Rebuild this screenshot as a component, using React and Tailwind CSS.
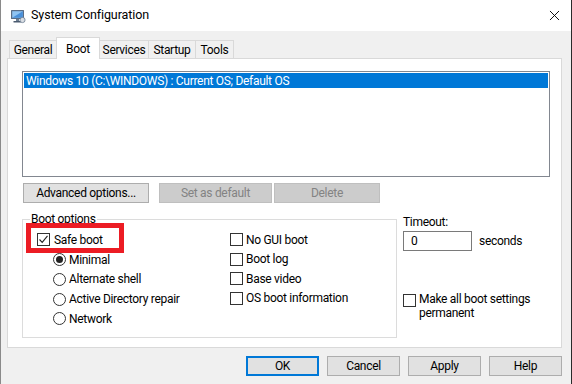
import { X } from 'lucide-react'

const FONT = { fontFamily: 'Roboto, "Noto Sans", sans-serif' }

const TABS = [
  { label: 'General', w: 'w-[48px]' },
  { label: 'Boot', w: 'w-[44px]', active: true },
  { label: 'Services', w: 'w-[50px]' },
  { label: 'Startup', w: 'w-[48px]' },
  { label: 'Tools', w: 'w-[39px]' },
]

function CheckBox({ checked }) {
  return (
    <span className="flex h-[13px] w-[13px] shrink-0 items-center justify-center border border-[#333] bg-white">
      {checked && (
        <svg viewBox="0 0 11 11" className="h-[11px] w-[11px]">
          <path d="M1.5 5.5 L4.2 8.3 L9.5 1.8" fill="none" stroke="#222" strokeWidth="1.1" />
        </svg>
      )}
    </span>
  )
}

function Radio({ checked }) {
  return (
    <span className="flex h-[13px] w-[13px] shrink-0 items-center justify-center rounded-full border border-[#333] bg-white">
      {checked && <span className="h-[7px] w-[7px] rounded-full bg-[#222]" />}
    </span>
  )
}

function AppIcon() {
  return (
    <svg viewBox="0 0 16 16" className="h-4 w-4">
      <rect x="1" y="2" width="13" height="9" rx="0.5" fill="#5a6d86" />
      <rect x="2.2" y="3.2" width="10.6" height="6.6" fill="#8fc4f3" />
      <path d="M2.2 9.8 L12.8 3.2 L12.8 9.8 Z" fill="#4a90d9" />
      <rect x="6" y="11" width="3" height="2" fill="#6b7c90" />
      <rect x="3.5" y="13" width="8" height="1.5" fill="#4b5b70" />
      <circle cx="12.5" cy="12" r="2.6" fill="#d9dde3" stroke="#6b7c90" strokeWidth="0.8" />
    </svg>
  )
}

function Button({ children, w, disabled, primary }) {
  return (
    <div
      className={`flex h-[20px] items-center justify-center ${w} ${
        disabled
          ? 'border border-[#bfbfbf] bg-[#cccccc] text-[#838383]'
          : primary
            ? 'border-2 border-[#0078d7] bg-[#e1e1e1] text-black'
            : 'border border-[#adadad] bg-[#e1e1e1] text-black'
      }`}
    >
      {children}
    </div>
  )
}

export default function App() {
  return (
    <div style={FONT} className="flex h-[384px] w-[572px] flex-col overflow-hidden border-l border-r border-l-[#8a8a8a] border-r-[#2b2b2b] bg-[#f0f0f0] text-[12px] tracking-[-0.3px] text-black">
      {/* title bar */}
      <div className="flex h-[31px] shrink-0 items-center bg-white">
        <div className="ml-[9px]">
          <AppIcon />
        </div>
        <span className="ml-[5px] text-[12.5px] tracking-[-0.1px]">System Configuration</span>
        <X className="ml-auto mr-[8px] h-[17px] w-[17px] text-black" strokeWidth={1.3} />
      </div>

      {/* tabs */}
      <div className="ml-[8px] mt-[6px] flex h-[21px] items-end">
        {TABS.map((t, i) =>
          t.active ? (
            <div
              key={t.label}
              className={`relative z-10 -mb-px -ml-px flex h-[22px] items-start justify-center border border-b-0 border-[#d9d9d9] bg-white pt-[2px] ${t.w}`}
            >
              {t.label}
            </div>
          ) : (
            <div
              key={t.label}
              className={`flex h-[18px] items-center justify-center border border-b-0 border-[#d9d9d9] bg-[#f0f0f0] ${
                i > 0 ? '-ml-px' : ''
              } ${t.w}`}
            >
              {t.label}
            </div>
          )
        )}
      </div>

      {/* tab page */}
      <div className="ml-[6px] flex h-[290px] w-[555px] flex-col border border-[#d9d9d9] bg-white">
        {/* boot list */}
        <div className="ml-[14px] mt-[12px] h-[106px] w-[528px] border border-[#828790] bg-white p-px">
          <div className="flex h-[15px] items-center bg-[#0078d7] pl-[2px] text-white">
            Windows 10 (C:\WINDOWS) : Current OS; Default OS
          </div>
        </div>

        {/* list buttons */}
        <div className="ml-[15px] mt-[6px] flex gap-[10px]">
          <Button w="w-[126px]">Advanced options...</Button>
          <div className="flex gap-[2px]">
            <Button w="w-[113px]" disabled>Set as default</Button>
            <Button w="w-[106px]" disabled>Delete</Button>
          </div>
        </div>

        <div className="mt-[8px] flex">
          {/* boot options group */}
          <fieldset className="relative ml-[14px] h-[127px] w-[375px] border border-[#dcdcdc] pt-[3px]">
            <legend className="ml-[7px] h-[16px] px-px leading-[16px]">Boot options</legend>
            <div
              aria-hidden
              className="pointer-events-none absolute left-[3px] top-[-4px] h-[30px] w-[98px] border-[5px] border-[#ec1c24]"
            />
            <div className="flex">
              <div className="flex w-[207px] flex-col">
                <div className="flex h-[19.75px] items-center gap-[4px] pl-[14px]">
                  <CheckBox checked />
                  <span>Safe boot</span>
                </div>
                {['Minimal', 'Alternate shell', 'Active Directory repair', 'Network'].map((r, i) => (
                  <div key={r} className="flex h-[19.75px] items-center gap-[3px] pl-[30px]">
                    <Radio checked={i === 0} />
                    <span>{r}</span>
                  </div>
                ))}
              </div>
              <div className="flex flex-col">
                {['No GUI boot', 'Boot log', 'Base video', 'OS boot information'].map((c) => (
                  <div key={c} className="flex h-[19.5px] items-center gap-[3px]">
                    <CheckBox />
                    <span>{c}</span>
                  </div>
                ))}
              </div>
            </div>
          </fieldset>

          {/* timeout */}
          <div className="ml-[6px] flex flex-col">
            <span className="mt-[3px] leading-[16px]">Timeout:</span>
            <div className="mt-[1px] flex items-center">
              <div className="flex h-[20px] w-[69px] items-center border border-[#7a7a7a] bg-white pl-[7px]">0</div>
              <span className="ml-[7px]">seconds</span>
            </div>
            <div className="mt-[42px] flex items-start gap-[3px]">
              <span className="mt-[1px]">
                <CheckBox />
              </span>
              <span className="leading-[13.5px]">
                Make all boot settings
                <br />
                permanent
              </span>
            </div>
          </div>
        </div>
      </div>

      {/* dialog buttons */}
      <div className="mr-[9px] mt-[8px] flex justify-end gap-[8px]">
        <Button w="w-[73px]" primary>OK</Button>
        <Button w="w-[73px]">Cancel</Button>
        <Button w="w-[73px]">Apply</Button>
        <Button w="w-[73px]">Help</Button>
      </div>
    </div>
  )
}
